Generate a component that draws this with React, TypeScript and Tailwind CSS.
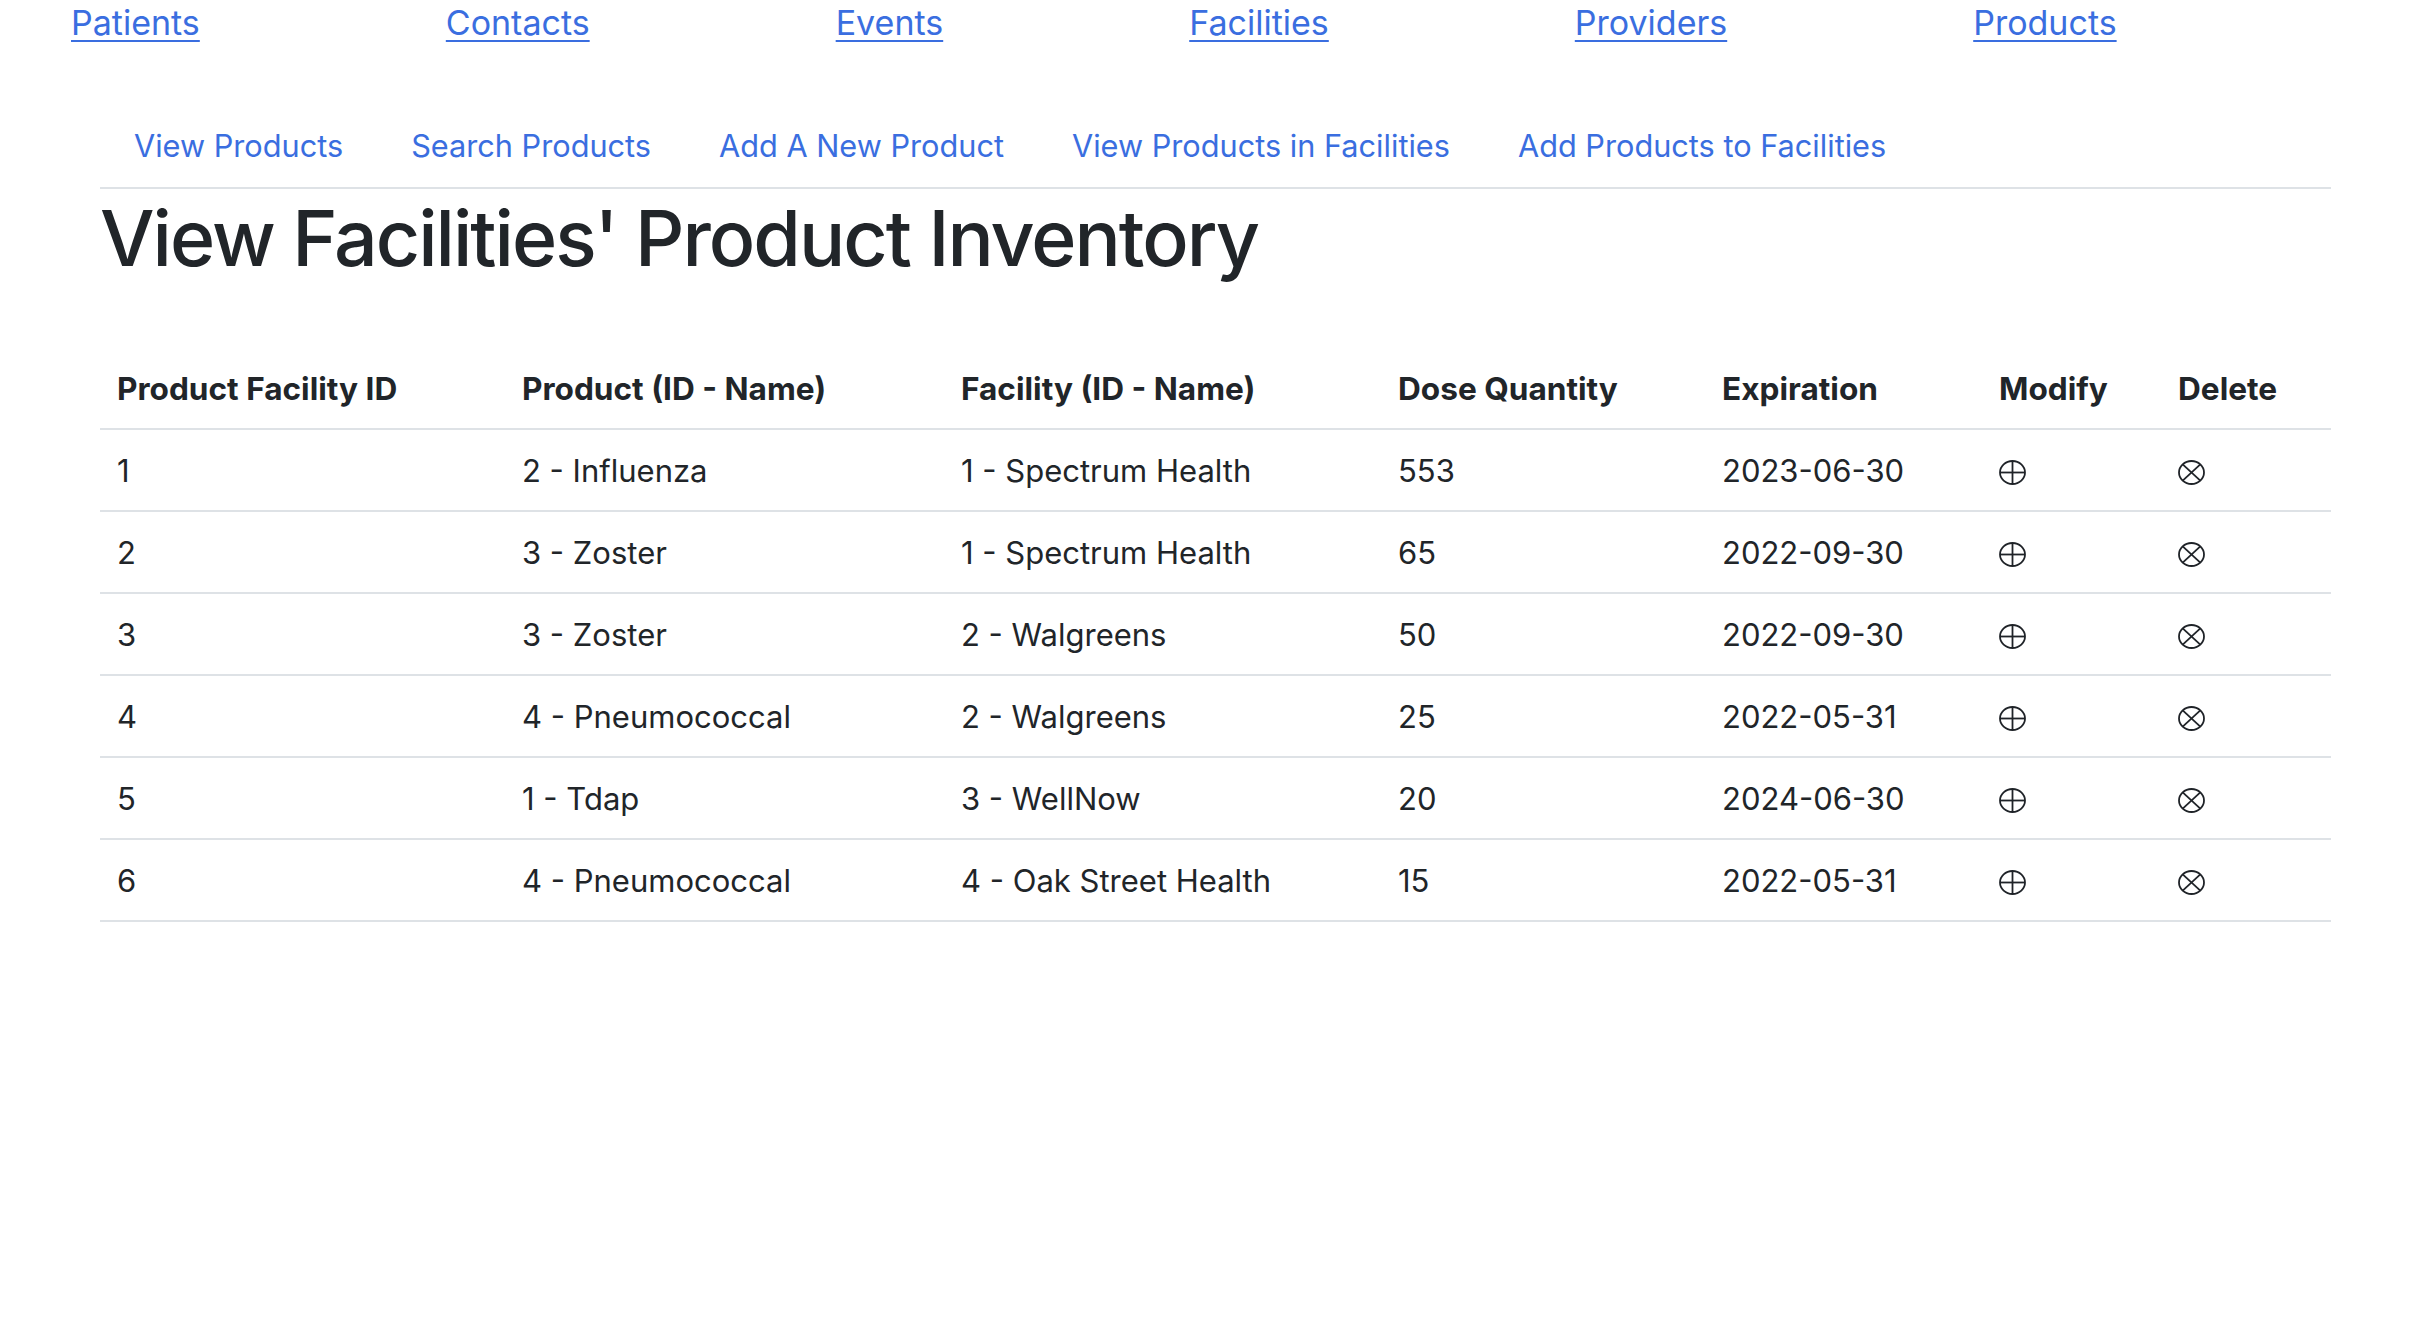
const topLinks = ["Patients", "Contacts", "Events", "Facilities", "Providers", "Products"];

const subLinks = [
  "View Products",
  "Search Products",
  "Add A New Product",
  "View Products in Facilities",
  "Add Products to Facilities",
];

const columns = [
  { label: "Product Facility ID", width: "w-[405px]" },
  { label: "Product (ID - Name)", width: "w-[439px]" },
  { label: "Facility (ID - Name)", width: "w-[437px]" },
  { label: "Dose Quantity", width: "w-[324px]" },
  { label: "Expiration", width: "w-[277px]" },
  { label: "Modify", width: "w-[179px]" },
  { label: "Delete", width: "w-[170px]" },
];

const rows = [
  { id: 1, product: "2 - Influenza", facility: "1 - Spectrum Health", qty: 553, exp: "2023-06-30" },
  { id: 2, product: "3 - Zoster", facility: "1 - Spectrum Health", qty: 65, exp: "2022-09-30" },
  { id: 3, product: "3 - Zoster", facility: "2 - Walgreens", qty: 50, exp: "2022-09-30" },
  { id: 4, product: "4 - Pneumococcal", facility: "2 - Walgreens", qty: 25, exp: "2022-05-31" },
  { id: 5, product: "1 - Tdap", facility: "3 - WellNow", qty: 20, exp: "2024-06-30" },
  { id: 6, product: "4 - Pneumococcal", facility: "4 - Oak Street Health", qty: 15, exp: "2022-05-31" },
];

const PlusCircle = () => (
  <svg width="27" height="25" viewBox="0 0 27 25" fill="none" stroke="#1f2328" strokeWidth="1.8">
    <ellipse cx="13.5" cy="12.5" rx="12.5" ry="11.5" />
    <line x1="13.5" y1="1" x2="13.5" y2="24" />
    <line x1="1" y1="12.5" x2="26" y2="12.5" />
  </svg>
);

const TimesCircle = () => (
  <svg width="27" height="25" viewBox="0 0 27 25" fill="none" stroke="#1f2328" strokeWidth="1.8">
    <ellipse cx="13.5" cy="12.5" rx="12.5" ry="11.5" />
    <line x1="4.7" y1="4.4" x2="22.3" y2="20.6" />
    <line x1="22.3" y1="4.4" x2="4.7" y2="20.6" />
  </svg>
);

const cell = "px-[17px] pt-[17px] pb-[15px] leading-[48px] border-b-2 border-[#dee2e6] text-left align-middle";

const App = () => {
  return (
    <div className="min-h-screen bg-white text-[#212529] font-['Inter',sans-serif]">
      <div className="flex gap-[246px] pl-[71px] h-[46px] leading-[46px] text-[34px]">
        {topLinks.map((link) => (
          <a key={link} href="#" className="text-[#3a6ee0] underline decoration-2 underline-offset-[5px]">
            {link}
          </a>
        ))}
      </div>

      <div className="ml-[100px] w-[2231px]">
        <ul className="mt-[59px] flex border-b-2 border-[#dee2e6] text-[30.7px]">
          {subLinks.map((link) => (
            <li key={link}>
              <a href="#" className="block px-[34px] py-[17px] leading-[48px] text-[#3a6ee0]">
                {link}
              </a>
            </li>
          ))}
        </ul>

        <h1 className="mt-[3px] text-[77px] leading-[92px] font-medium tracking-[-2px]">
          View Facilities' Product Inventory
        </h1>

        <table className="mt-[64px] w-full table-fixed text-[31px]">
          <thead>
            <tr>
              {columns.map((col) => (
                <th key={col.label} className={`${cell} ${col.width} font-bold text-[31.6px]`}>
                  {col.label}
                </th>
              ))}
            </tr>
          </thead>
          <tbody>
            {rows.map((row) => (
              <tr key={row.id}>
                <td className={cell}>{row.id}</td>
                <td className={cell}>{row.product}</td>
                <td className={cell}>{row.facility}</td>
                <td className={cell}>{row.qty}</td>
                <td className={cell}>{row.exp}</td>
                <td className={cell}>
                  <div className="flex h-[48px] items-center pt-[2px]">
                    <PlusCircle />
                  </div>
                </td>
                <td className={cell}>
                  <div className="flex h-[48px] items-center pt-[2px]">
                    <TimesCircle />
                  </div>
                </td>
              </tr>
            ))}
          </tbody>
        </table>
      </div>
    </div>
  );
};

export default App;
